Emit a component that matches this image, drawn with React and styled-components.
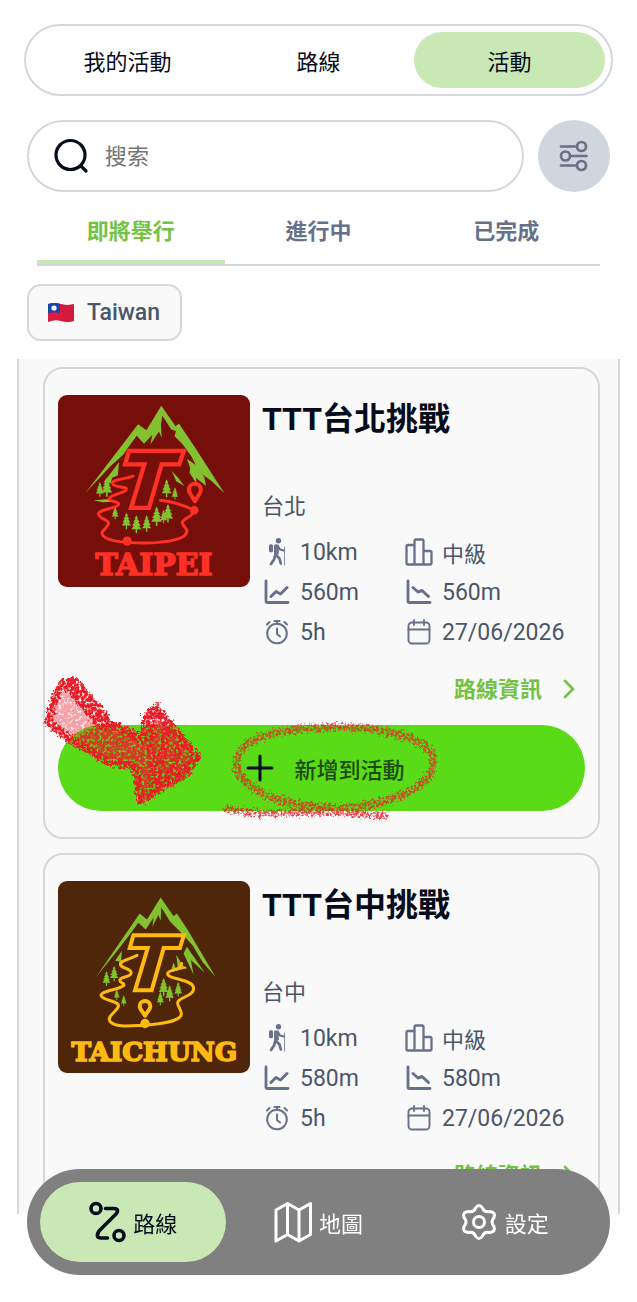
import React, { useState } from 'react'
import styled, { createGlobalStyle } from 'styled-components'

const GlobalStyle = createGlobalStyle`
  * {
    box-sizing: border-box;
  }

  body {
    margin: 0;
    background: #fff;
    color: #060c1c;
    font-family: Roboto, 'Noto Sans CJK TC', sans-serif;
    font-size: 22px;
  }

  button, input {
    font-family: inherit;
    font-size: inherit;
    color: inherit;
    padding: 0;
    margin: 0;
    border: none;
    background: transparent;
  }

  button {
    cursor: pointer;
  }

  h2, p {
    margin: 0;
  }
`

const events = [
  { id: 'taipei', title: 'TTT台北挑戰', city: '台北', distance: '10km', level: '中級', up: '560m', down: '560m', time: '5h', date: '27/06/2026', marked: true },
  { id: 'taichung', title: 'TTT台中挑戰', city: '台中', distance: '10km', level: '中級', up: '580m', down: '580m', time: '5h', date: '27/06/2026', marked: false },
]

/* icons */
const Icon = ({ size = 28, width = 2, children }) => (
  <svg width={size} height={size} viewBox="0 0 28 28" fill="none" stroke="currentColor" strokeWidth={width} strokeLinecap="round" strokeLinejoin="round" aria-hidden="true">
    {children}
  </svg>
)

const SearchIcon = () => (
  <svg width="36" height="36" viewBox="0 0 36 36" fill="none" stroke="currentColor" strokeWidth="3.2" strokeLinecap="round" aria-hidden="true">
    <circle cx="17.500" cy="17" r="14.5" />
    <path d="M28 28l5 5" />
  </svg>
)

const FilterIcon = () => (
  <svg width="30" height="32" viewBox="0 0 30 32" fill="none" stroke="currentColor" strokeWidth="2.7" strokeLinecap="round" aria-hidden="true">
    <path d="M2 6.500h16M11.500 16h16M2 25.500h16" />
    <circle cx="22.500" cy="6.500" r="4.500" />
    <circle cx="6.500" cy="16" r="4.500" />
    <circle cx="22.500" cy="25.500" r="4.500" />
  </svg>
)

const HikerIcon = () => (
  <Icon width={1}>
    <circle cx="15.500" cy="2.800" r="2.700" fill="currentColor" stroke="none" />
    <rect x="6" y="6.200" width="4" height="8" rx="1.500" fill="currentColor" stroke="none" />
    <path d="M12.500 8v8.500l4 4 1.300 5M12.500 16.500l-1.500 5-3 4.500" strokeWidth="2.700" />
    <path d="M12.200 7.500h2.600v8h-2.600zM15 8l2 3.500 4 1" strokeWidth="2" />
    <path d="M21.500 9v18" strokeWidth="1.200" opacity=".7" />
  </Icon>
)

const PodiumIcon = () => (
  <Icon width={2.3}>
    <path d="M9.500 26.500V3q0-1.500 1.500-1.500h6q1.500 0 1.500 1.500v23.500M9.500 7H3Q1.500 7 1.500 8.500V25q0 1.500 1.500 1.500h22q1.500 0 1.500-1.500V14.500q0-1.500-1.500-1.500h-6.500" />
  </Icon>
)

const UpIcon = () => (
  <Icon width={2.8}>
    <path d="M3 3v20q0 1.500 1.500 1.500H25" />
    <path d="M8 18.500l5-5 4.500 2.500L24 9.500" strokeWidth="3" />
  </Icon>
)

const DownIcon = () => (
  <Icon width={2.8}>
    <path d="M3 3v20q0 1.500 1.500 1.500H25" />
    <path d="M8 9.500l5 4.500 4-1.500 6.500 6" strokeWidth="3" />
  </Icon>
)

const TimerIcon = () => (
  <Icon width={2}>
    <circle cx="14" cy="15.500" r="9.800" />
    <path d="M14 10.500v5.500l3 2.500M11.500 3h5M14 3v2.500M4 6.500l2.500-2.500M24 6.500l-2.500-2.500" />
  </Icon>
)

const CalendarIcon = () => (
  <Icon width={1.9}>
    <rect x="3.500" y="4.500" width="21" height="21" rx="3.500" />
    <path d="M3.500 11.500h21M9 2v5M19 2v5" />
  </Icon>
)

const RouteIcon = () => (
  <svg width="38" height="46" viewBox="0 0 38 46" fill="none" stroke="currentColor" strokeWidth="3.600" strokeLinecap="round" strokeLinejoin="round" aria-hidden="true">
    <circle cx="8" cy="9.500" r="5" />
    <circle cx="31" cy="36.500" r="5" />
    <path d="M17.500 9.500h8q6 0 3 5L11 32q-4 7 2 7h6.500" />
  </svg>
)

const MapIcon = () => (
  <svg width="38" height="46" viewBox="0 0 38 46" fill="none" stroke="currentColor" strokeWidth="3" strokeLinejoin="round" aria-hidden="true">
    <path d="M2 11L13.500 4.500 25 11l11.500-6.500V35.500L25 42l-11.500-6.500L2 42zM13.500 4.500v31M25 11v31" />
  </svg>
)

const GearIcon = () => (
  <svg width="38" height="46" viewBox="0 0 38 46" fill="none" stroke="currentColor" strokeWidth="3" strokeLinejoin="round" aria-hidden="true">
    <circle cx="19" cy="23" r="5.500" />
    <path d="M15.500 9Q19 4 22.500 9q1.500 4.500 7 3.500Q36 13 34 18.500q-4 4.500 0 9 2 5.500-4.500 6-5.500-1-7 3.500Q19 42 15.500 37q-1.500-4.500-7-3.500Q2 33 4 27.500q4-4.500 0-9-2-5.500 4.500-6 5.500 1 7-3.500z" />
  </svg>
)

const ChevronIcon = () => (
  <svg width="14" height="22" viewBox="0 0 14 22" fill="none" stroke="currentColor" strokeWidth="2.600" strokeLinecap="round" strokeLinejoin="round" aria-hidden="true">
    <path d="M3 2l8 8-8 8" />
  </svg>
)

const PlusIcon = () => (
  <svg width="28" height="28" viewBox="0 0 28 28" stroke="#060c1c" strokeWidth="3" strokeLinecap="round" aria-hidden="true">
    <path d="M14 2v24M2 14h24" />
  </svg>
)

const FlagIcon = () => (
  <svg width="28" height="22" viewBox="0 0 28 22" aria-hidden="true">
    <path d="M1 2q7-2 13 0t13 0v17q-7 2-13 0t-13 1z" fill="#db1a40" />
    <path d="M14 2q6 2 13 0v17q-5 1.500-9 .800z" fill="#c81a3c" opacity=".5" />
    <path d="M1 2q7-2 12 0v9q-6-1.500-12 0z" fill="#1746a8" />
    <circle cx="7" cy="6" r="2.600" fill="#fff" />
  </svg>
)
/* end of icons */

const Tree = ({ x, y, h }) => (
  <path
    transform={`translate(${x} ${y}) scale(${h / 50})`}
    d="M0 0l5 10-3 0 7 9-4 0 7 10-5 0 7 10H2v11h-4V39h-12l7-10h-5l7-10h-4l7-9h-3z"
    fill="#82c12f"
  />
)

const TaipeiLogo = () => (
  <Logo viewBox="24 30 578 578" role="img" aria-label="Taipei">
    <rect x="24" y="30" width="578" height="578" fill="#760f09" />
    <g fill="#82c12f">
      <path d="M107 324L265 118l25 18 45-74 43 62 10-8 50 74 87 136-38-36-38-28-24-48-28-38-22-22 4-16-14-4-27-42-4 26 2 42-8-20-26 38 6-28-25 27-22-24-28 38-12 18-40 36z" />
      <path d="M412 222l26 18 26 36 6 28-30-24v16l-20-32 2-14zM208 232l-4 40-17 7-4 16-22-2 22-28z" />
      <path d="M130 347l50-4 10 8-30 2zM366 258l22 24 16 22-24-14z" />
    </g>
    <Tree x={150} y={292} h={44} />
    <Tree x={171} y={278} h={58} />
    <Tree x={351} y={284} h={54} />
    <Tree x={376} y={308} h={36} />
    <Tree x={196} y={366} h={38} />
    <Tree x={230} y={384} h={50} />
    <Tree x={260} y={392} h={54} />
    <Tree x={291} y={392} h={50} />
    <Tree x={321} y={366} h={58} />
    <Tree x={342} y={376} h={40} />
    <Tree x={355} y={358} h={56} />
    <g fill="none" stroke="#ff3024" strokeWidth="9" strokeLinecap="round" strokeLinejoin="round">
      <path d="M250 274c-34 12-62 10-62 22 2 14 44 8 42 18-4 12-44 14-52 28-2 8 32 8 28 18-6 12-60 14-60 28s34 18 30 30c-8 20-30 22-14 38 30 28 220 26 244-4 20-20-16-28-6-42 8-12 28-12 34-32M434 377c-34-16-60-26-102-30" />
      <path d="M238 198h165l-14 41h-53l-38 131h-54l40-131h-58z" fill="#760f09" strokeLinejoin="miter" strokeWidth="13" />
      <path d="M436 350c-7-14-18-24-18-35a18 18 0 0 1 36 0c0 11-11 21-18 35z" strokeWidth="12" />
    </g>
    <circle cx="232" cy="470" r="14" fill="#ff3024" />
    <circle cx="434" cy="377" r="13" fill="#ff3024" />
    <LogoText x="313" y="573" fill="#ff3024" stroke="#ff3024" fontSize="90">TAIPEI</LogoText>
  </Logo>
)

const TaichungLogo = () => (
  <Logo viewBox="24 30 578 578" role="img" aria-label="Taichung">
    <rect x="24" y="30" width="578" height="578" fill="#4f2609" />
    <g fill="#82c12f">
      <path d="M138 320L270 128l22 18 41-66 39 56 10-8 34 52 82 138-38-43-30-50-30-34-38-38-27-43-2 40-7-18-18 36 4-28-24 36-22-20-31 42-35 45z" />
      <path d="M412 228l54 78-42-38 8 44-30-64zM216 240l-2 34-18-4zM380 252l18 30 14 12-28-6z" />
    </g>
    <Tree x={170} y={302} h={44} />
    <Tree x={193} y={286} h={46} />
    <Tree x={201} y={356} h={32} />
    <Tree x={222} y={374} h={32} />
    <Tree x={342} y={322} h={54} />
    <Tree x={360} y={344} h={48} />
    <Tree x={386} y={334} h={44} />
    <Tree x={332} y={364} h={40} />
    <Tree x={372} y={276} h={28} />
    <g fill="none" stroke="#ffba12" strokeWidth="9" strokeLinecap="round" strokeLinejoin="round">
      <path d="M262 254c-28 14-52 16-50 28 4 12 36 12 32 26s-36 8-34 22c2 8 16 8 12 14-16 14-74 18-68 32 8 16 54 14 52 30-4 18-36 30-26 46 18 20 60 14 106 12 50-4 96-10 108-28 8-18-22-36-4-48s46-18 42-38c-6-26-82-24-78-42 2-12 42-8 42-30" />
      <path d="M251 193h152l-12 39h-49l-36 127h-50l38-127h-54z" fill="#4f2609" strokeLinejoin="miter" strokeWidth="12" />
      <path d="M286 436c-7-13-16-20-16-29a16 16 0 0 1 32 0c0 9-9 16-16 29z" strokeWidth="12" />
    </g>
    <circle cx="286" cy="459" r="14" fill="#ffba12" />
    <path d="M366 300l44-10" stroke="#ffba12" strokeWidth="6" />
    <LogoText x="314" y="572" fill="#ffba12" stroke="#ffba12" fontSize="79">TAICHUNG</LogoText>
  </Logo>
)

/* crayon arrow and ring over the add button */
const CrayonMarks = () => (
  <Crayon viewBox="30 660 420 180" aria-hidden="true">
    <defs>
      <filter id="crayon" x="-10%" y="-10%" width="120%" height="120%">
        <feTurbulence type="fractalNoise" baseFrequency="0.4" numOctaves="3" seed="4" result="noise" />
        <feDisplacementMap in="SourceGraphic" in2="noise" scale="10" xChannelSelector="R" yChannelSelector="G" result="rough" />
        <feColorMatrix in="noise" type="matrix" values="0 0 0 0 0  0 0 0 0 0  0 0 0 0 0  0 0 0 -4 2.7" result="grain" />
        <feComposite in="rough" in2="grain" operator="in" />
      </filter>
      <filter id="crayonDense" x="-10%" y="-10%" width="120%" height="120%">
        <feTurbulence type="fractalNoise" baseFrequency="0.35" numOctaves="3" seed="9" result="noise" />
        <feDisplacementMap in="SourceGraphic" in2="noise" scale="9" xChannelSelector="R" yChannelSelector="G" result="rough" />
        <feColorMatrix in="noise" type="matrix" values="0 0 0 0 0  0 0 0 0 0  0 0 0 0 0  0 0 0 -4 3" result="grain" />
        <feComposite in="rough" in2="grain" operator="in" />
      </filter>
    </defs>
    <g fill="none" stroke="#e81c28" strokeLinecap="round" strokeLinejoin="round">
      <g filter="url(#crayonDense)">
        <path d="M50 724l14-40 14-1 30 38-34 20z" fill="#e81c28" fillOpacity=".4" stroke="none" />
        <path d="M74 741l32-20 38 18 4-28 10-8 44 56-12 18-44 26-8-32-44-16z" fill="#e81c28" fillOpacity=".85" stroke="none" />
        <path d="M50 722q4-24 14-38l12-2 30 36M50 724l24 18 34 20 28 6 6 34M104 722l40 18 4-24 8-6 42 48-10 12-46 30" strokeWidth="8" />
        <path d="M70 686l30 36 10 4" strokeWidth="12" />
        <path d="M152 720l2 70M168 730l-10 54M182 744l-12 34" strokeWidth="8" />
      </g>
      <g filter="url(#crayon)">
        <path d="M258 740c26-12 90-16 130-7 30 6 50 16 46 34-4 24-50 40-90 42-46 1-90-12-104-34-6-14 0-28 18-35" strokeWidth="8" strokeOpacity=".7" />
        <path d="M228 810q30 7 80 3 40 0 78 4" strokeWidth="7" strokeOpacity=".8" />
      </g>
    </g>
  </Crayon>
)

const EventCard = ({ event }) => (
  <Card>
    <Summary>
      {event.id === 'taipei' ? <TaipeiLogo /> : <TaichungLogo />}
      <Details>
        <Title>{event.title}</Title>
        <City>{event.city}</City>
        <Stats>
          <Stat><StatIcon><HikerIcon /></StatIcon>{event.distance}</Stat>
          <Stat $small><StatIcon><PodiumIcon /></StatIcon>{event.level}</Stat>
          <Stat><StatIcon><UpIcon /></StatIcon>{event.up}</Stat>
          <Stat><StatIcon><DownIcon /></StatIcon>{event.down}</Stat>
          <Stat><StatIcon><TimerIcon /></StatIcon>{event.time}</Stat>
          <Stat><StatIcon><CalendarIcon /></StatIcon>{event.date}</Stat>
        </Stats>
      </Details>
    </Summary>
    <InfoLink href="#">路線資訊 <ChevronIcon /></InfoLink>
    <AddButton type="button"><PlusIcon />新增到活動</AddButton>
    {event.marked && <CrayonMarks />}
  </Card>
)

const App = () => {
  const [section, setSection] = useState('活動')
  const [status, setStatus] = useState('即將舉行')

  return (
    <Screen>
      <GlobalStyle />
      <Segments>
        {['我的活動', '路線', '活動'].map((name) => (
          <Segment key={name} type="button" $active={section === name} onClick={() => setSection(name)}>{name}</Segment>
        ))}
      </Segments>

      {/* search */}
      <SearchRow>
        <SearchBox>
          <SearchIcon />
          <SearchInput type="text" placeholder="搜索" aria-label="搜索" />
        </SearchBox>
        <FilterButton type="button" aria-label="篩選"><FilterIcon /></FilterButton>
      </SearchRow>
      {/* end of search */}

      <Tabs>
        {['即將舉行', '進行中', '已完成'].map((name) => (
          <Tab key={name} type="button" $active={status === name} onClick={() => setStatus(name)}>{name}</Tab>
        ))}
      </Tabs>

      <Country type="button"><FlagIcon />Taiwan</Country>

      <Panel>
        {events.map((event) => <EventCard key={event.id} event={event} />)}
      </Panel>

      <BottomNav>
        <NavLink href="#" $active><RouteIcon />路線</NavLink>
        <NavLink href="#"><MapIcon />地圖</NavLink>
        <NavLink href="#"><GearIcon />設定</NavLink>
      </BottomNav>
    </Screen>
  )
}

const Screen = styled.div`
  display: flex;
  flex-direction: column;
  height: 100vh;
  padding: 24px 0 88px;
`

const Segments = styled.nav`
  display: flex;
  flex-shrink: 0;
  height: 72px;
  margin: 0 24px;
  padding: 6px;
  border: 2px solid #d3d8de;
  border-radius: 36px;
`

const Segment = styled.button`
  flex: 1;
  border-radius: 28px;
  background: ${(props) => (props.$active ? '#c9e8b6' : 'transparent')};
`

const SearchRow = styled.div`
  display: flex;
  flex-shrink: 0;
  gap: 14px;
  margin: 24px 27px 0;
`

const SearchBox = styled.label`
  display: flex;
  flex: 1;
  align-items: center;
  gap: 16px;
  height: 72px;
  padding: 0 24px;
  border: 2px solid #d3d8de;
  border-radius: 36px;
`

const SearchInput = styled.input`
  flex: 1;
  min-width: 0;
  height: 40px;
  outline: none;

  &::placeholder {
    color: #757575;
    opacity: 1;
  }
`

const FilterButton = styled.button`
  display: grid;
  place-items: center;
  width: 72px;
  height: 72px;
  border-radius: 50%;
  background: #cfd6dd;
  color: #67718a;
`

const Tabs = styled.div`
  display: flex;
  flex-shrink: 0;
  height: 74px;
  margin: 0 37px;
  border-bottom: 2px solid #cfd6dd;
`

const Tab = styled.button`
  flex: 1;
  padding-top: 6px;
  border-bottom: 4px solid ${(props) => (props.$active ? '#c9e8b6' : 'transparent')};
  color: ${(props) => (props.$active ? '#72c244' : '#67718a')};
  font-weight: 700;
`

const Country = styled.button`
  display: flex;
  flex-shrink: 0;
  align-items: center;
  align-self: flex-start;
  gap: 12px;
  height: 57px;
  margin: 18px 27px;
  padding: 0 20px 0 18px;
  border: 2px solid #d3d8de;
  border-radius: 14px;
  background: #f9f9f9;
  color: #4a5669;
  font-size: 23px;
  font-weight: 500;
`

const Panel = styled.main`
  flex: 1;
  min-height: 0;
  margin: 0 17px;
  padding: 8px 18px 0 24px;
  overflow-y: auto;
  scrollbar-width: none;
  border: solid #d3d8de;
  border-width: 0 2px;
  background: #f9f9f9;
`

const Card = styled.article`
  position: relative;
  display: flex;
  flex-direction: column;
  margin-bottom: 14px;
  padding: 26px 13px;
  border: 2px solid #d3d8de;
  border-radius: 20px;
`

const Summary = styled.div`
  display: flex;
  gap: 12px;
`

const Logo = styled.svg`
  flex-shrink: 0;
  width: 192px;
  height: 192px;
  border-radius: 9px;
`

const LogoText = styled.text`
  font-family: 'DejaVu Serif', serif;
  font-weight: bold;
  stroke-width: 5px;
  text-anchor: middle;
`

const Details = styled.div`
  flex: 1;
  min-width: 0;
`

const Title = styled.h2`
  font-size: 32px;
  font-weight: 700;
  line-height: 48px;
`

const City = styled.p`
  margin-top: 48px;
  color: #4a5669;
  line-height: 32px;
`

const Stats = styled.div`
  display: grid;
  grid-template-columns: 142px 1fr;
  margin-top: 9px;
`

const Stat = styled.div`
  display: flex;
  align-items: center;
  gap: 8px;
  height: 40px;
  color: #4a5669;
  font-size: ${(props) => (props.$small ? '22px' : '23px')};
  white-space: nowrap;
`

const StatIcon = styled.span`
  display: grid;
  place-items: center;
  width: 30px;
  color: #67718a;
`

const InfoLink = styled.a`
  display: flex;
  align-items: center;
  align-self: flex-end;
  gap: 20px;
  margin: 22px 9px 19px;
  color: #72c244;
  font-weight: 700;
  line-height: 32px;
  text-decoration: none;
`

const AddButton = styled.button`
  display: flex;
  align-items: center;
  justify-content: center;
  gap: 20px;
  height: 86px;
  padding-left: 8px;
  border-radius: 43px;
  background: #59db17;
  color: #1f4a12;
  font-weight: 500;
`

const Crayon = styled.svg`
  position: absolute;
  top: 290px;
  left: -16px;
  width: 420px;
  height: 180px;
  pointer-events: none;
`

const BottomNav = styled.nav`
  position: fixed;
  right: 27px;
  bottom: 27px;
  left: 27px;
  display: flex;
  height: 106px;
  padding: 13px;
  border-radius: 53px;
  background: #808080;
`

const NavLink = styled.a`
  display: flex;
  flex: 1;
  align-items: center;
  justify-content: center;
  gap: 7px;
  border-radius: 40px;
  background: ${(props) => (props.$active ? '#c9e8b6' : 'transparent')};
  color: ${(props) => (props.$active ? '#060c1c' : '#fff')};
  text-decoration: none;
`

export default App
